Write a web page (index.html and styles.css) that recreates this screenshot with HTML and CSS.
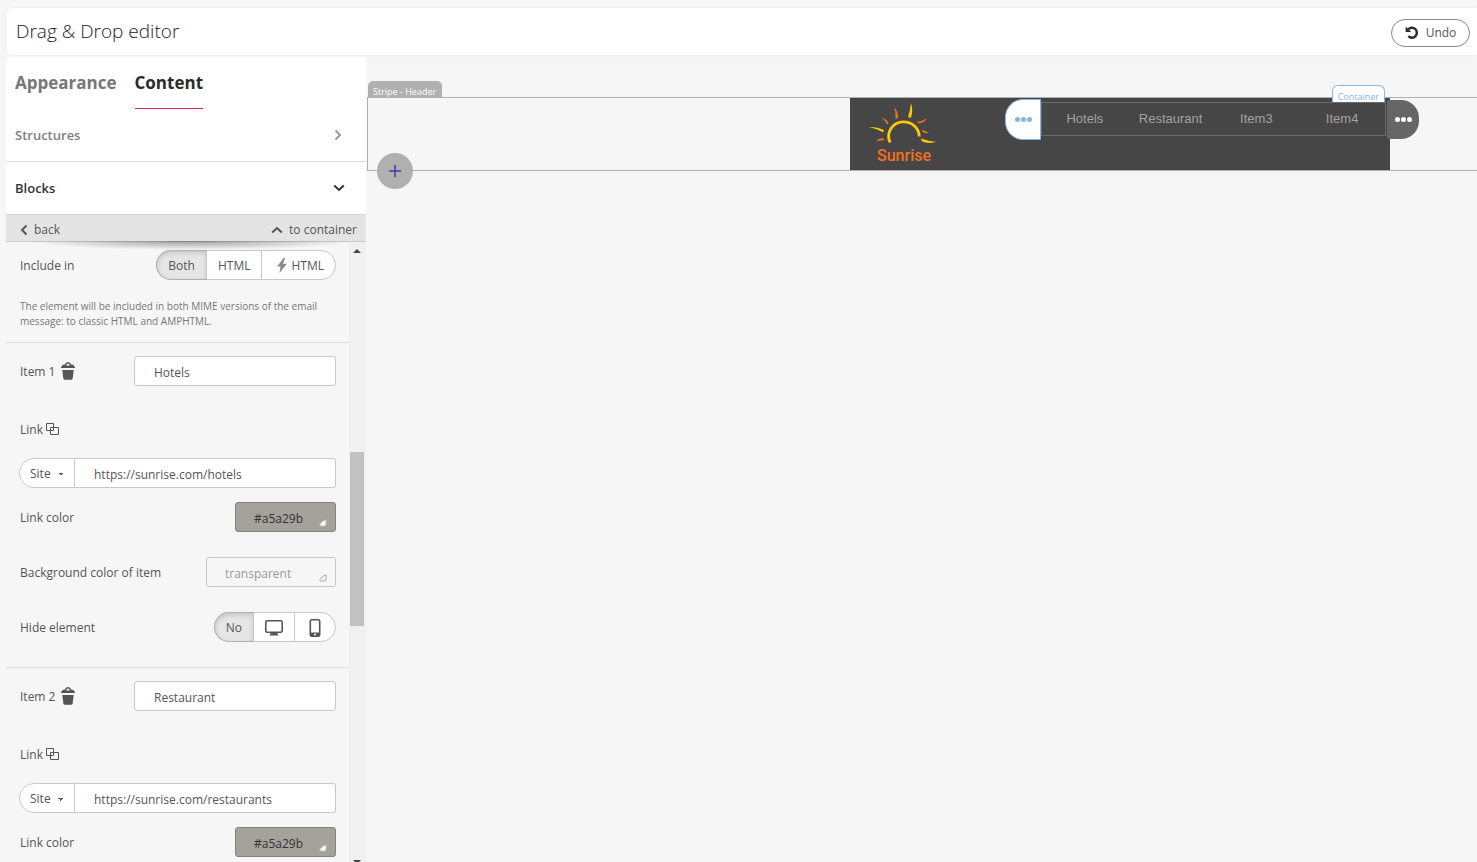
FILE: index.html
```html
<!DOCTYPE html>
<html lang="en">
<head>
<meta charset="utf-8">
<title>Drag &amp; Drop editor</title>
<link rel="stylesheet" href="styles.css">
</head>
<body>

<svg width="0" height="0" class="sprite">
  <symbol id="trash" viewBox="0 0 14 18">
    <path fill-rule="evenodd" d="M0 6Q.5 3 3.800 2.600 4.500 0 7 0t3.200 2.600Q13.500 3 14 6zM5.200 3.500h3.600Q8.600 1.600 7 1.600T5.200 3.500zM1.300 8h11.400l-1 8.200q-.2 1.600-1.700 1.600H4q-1.500 0-1.700-1.600z"/>
  </symbol>
  <symbol id="copy" viewBox="0 0 13 13">
    <path d="M.5.5h7v7h-7zM4.500 4.500h8v7h-8z" fill="none" stroke="currentColor"/>
  </symbol>
  <symbol id="corner" viewBox="0 0 8 8">
    <path d="M7 .8v4.200q0 2-2 2H2.200Q0 7 1 5.300 3 2 7 .8z"/>
  </symbol>
</svg>

<header class="topbar">
  <h1>Drag &amp; Drop editor</h1>
  <button class="undo" type="button">
    <svg width="14" height="14" viewBox="0 0 14 14"><path d="M3 3.500A5 5 0 1 1 3.300 10.200" fill="none" stroke="#2b2b33" stroke-width="2.400"/><path d="M.6 .4v5.600h5.600z" fill="#2b2b33"/></svg>
    Undo
  </button>
</header>

<div class="editor">
  <aside class="sidebar">
    <nav class="tabs">
      <a href="#appearance">Appearance</a>
      <a href="#content" class="active">Content</a>
    </nav>
    <button class="fold" type="button">Structures
      <svg width="8" height="12" viewBox="0 0 8 12"><path d="M1.500 1.500 6 6l-4.500 4.500" fill="none" stroke="#999" stroke-width="2"/></svg>
    </button>
    <button class="fold open" type="button">Blocks
      <svg width="12" height="8" viewBox="0 0 12 8"><path d="M1.200 1.500 6 6l4.800-4.500" fill="none" stroke="#333" stroke-width="2"/></svg>
    </button>
    <div class="crumbs">
      <a href="#back"><svg width="8" height="12" viewBox="0 0 8 12"><path d="M6.500 1.500 2 6l4.500 4.500" fill="none" stroke="#555" stroke-width="2"/></svg>back</a>
      <a href="#container"><svg width="12" height="8" viewBox="0 0 12 8"><path d="M1.200 6.500 6 2l4.800 4.500" fill="none" stroke="#555" stroke-width="2"/></svg>to container</a>
    </div>

    <div class="panel">
      <div class="settings">
        <section class="include">
          <div class="row">
            <span>Include in</span>
            <div class="group">
              <button class="on" type="button">Both</button>
              <button type="button">HTML</button>
              <button class="amp" type="button"><svg width="10" height="15" viewBox="0 0 10 15"><path d="M6.500 0 0 8.600h3.600L2.400 15 10 5.800H5.900L8.300 0z" fill="#8a8a8a"/></svg>HTML</button>
            </div>
          </div>
          <p class="hint">The element will be included in both MIME versions of the email message: to classic HTML and AMPHTML.</p>
        </section>

        <section class="item">
          <div class="row spaced">
            <label for="name1">Item 1</label>
            <button class="icon" type="button" aria-label="Delete item 1"><svg width="14" height="18"><use href="#trash"/></svg></button>
            <input class="name" id="name1" type="text" value="Hotels">
          </div>
          <div class="row tight">
            <label for="url1">Link</label>
            <button class="icon small" type="button" aria-label="Copy link 1"><svg width="13" height="13"><use href="#copy"/></svg></button>
          </div>
          <div class="row tight">
            <select class="kind" aria-label="Link type 1"><option>Site</option></select>
            <input class="url" id="url1" type="text" value="https://sunrise.com/hotels">
          </div>
          <div class="row">
            <label for="color1">Link color</label>
            <div class="swatch">
              <input id="color1" type="text" value="#a5a29b">
              <svg class="corner" width="8" height="8"><use href="#corner"/></svg>
            </div>
          </div>
          <div class="row">
            <label for="bg1">Background color of item</label>
            <div class="swatch empty">
              <input id="bg1" type="text" value="transparent">
              <svg class="corner" width="8" height="8"><use href="#corner"/></svg>
            </div>
          </div>
          <div class="row">
            <span>Hide element</span>
            <div class="group devices">
              <button class="on" type="button">No</button>
              <button type="button" aria-label="Desktop"><svg width="18" height="16" viewBox="0 0 18 16"><rect x=".8" y=".8" width="16.400" height="11.400" rx="1.500" fill="none" stroke="#555" stroke-width="1.600"/><path d="M6 12.500h6l1.500 3h-9z" fill="#555"/></svg></button>
              <button type="button" aria-label="Mobile"><svg width="12" height="18" viewBox="0 0 12 18"><rect x="1.300" y=".8" width="9.400" height="16.400" rx="1.500" fill="none" stroke="#555" stroke-width="1.600"/><path d="M1.500 13.500h9V17h-9z" fill="#555"/><circle cx="6" cy="15.500" r="1" fill="#fff"/></svg></button>
            </div>
          </div>
        </section>

        <section class="item">
          <div class="row spaced">
            <label for="name2">Item 2</label>
            <button class="icon" type="button" aria-label="Delete item 2"><svg width="14" height="18"><use href="#trash"/></svg></button>
            <input class="name" id="name2" type="text" value="Restaurant">
          </div>
          <div class="row tight">
            <label for="url2">Link</label>
            <button class="icon small" type="button" aria-label="Copy link 2"><svg width="13" height="13"><use href="#copy"/></svg></button>
          </div>
          <div class="row tight">
            <select class="kind" aria-label="Link type 2"><option>Site</option></select>
            <input class="url" id="url2" type="text" value="https://sunrise.com/restaurants">
          </div>
          <div class="row">
            <label for="color2">Link color</label>
            <div class="swatch">
              <input id="color2" type="text" value="#a5a29b">
              <svg class="corner" width="8" height="8"><use href="#corner"/></svg>
            </div>
          </div>
        </section>
      </div>
      <div class="scrollbar">
        <i class="up"></i>
        <i class="thumb"></i>
        <i class="down"></i>
      </div>
    </div>
  </aside>

  <main class="canvas">
    <div class="stripe">
      <span class="stripe-label">Stripe - Header</span>
      <button class="add" type="button" aria-label="Add stripe"><svg width="12" height="12" viewBox="0 0 12 12"><path d="M6 0v12M0 6h12" stroke="#4038a0" stroke-width="1.500"/></svg></button>
      <div class="mail">
        <svg class="logo" width="84" height="72" viewBox="0 0 84 72">
          <g fill="#ffc907">
            <path d="M51 5.300Q53.500 12 51 19.700L48 19.300Q50.300 12 51 5.300z"/>
            <path d="M9 29Q17 28.500 24 32L23.200 34.200Q16.500 30.600 9 29z"/>
            <path d="M61.300 40.500Q68 43.300 76 43.700Q68 46.500 61.600 43z"/>
          </g>
          <path d="M30 44.500C25.500 34 33 23.900 43.500 23.900 52 23.900 59 30 59.300 38.500" fill="none" stroke="#ffc907" stroke-width="2.800"/>
          <g fill="#f37021">
            <path d="M34.300 9.500Q38.600 14 38 20.300L35.500 20.800Q36 15 34.300 9.500z"/>
            <path d="M21.700 19.700Q26.500 20.500 28.600 25.300L26.800 26.300Q25 22 21.700 19.700z"/>
            <path d="M16 43.600Q19 39.500 23.800 40.500V42.600Q19 42 16 43.600z"/>
            <path d="M67 20.200Q64.500 25 58 25.300L57 23.700Q62 23.300 67 20.200z"/>
            <path d="M69 34.500Q66 36.500 62.300 33.700L62.600 31.700Q66 34 69 34.500z"/>
          </g>
          <text class="logo-text" x="44" y="63" text-anchor="middle">Sunrise</text>
        </svg>
        <nav class="menu">
          <a href="#hotels">Hotels</a>
          <a href="#restaurant">Restaurant</a>
          <a href="#item3">Item3</a>
          <a href="#item4">Item4</a>
          <span class="menu-label">Container</span>
          <button class="handle left" type="button" aria-label="Block menu"><i></i><i></i><i></i></button>
          <button class="handle right" type="button" aria-label="Structure menu"><i></i><i></i><i></i></button>
        </nav>
      </div>
    </div>
  </main>
</div>

</body>
</html>
```
FILE: styles.css
```css
* { box-sizing: border-box; }
body {
  margin: 0;
  padding: 8px 0 0 6px;
  height: 100vh;
  display: flex;
  flex-direction: column;
  overflow: hidden;
  background: #f6f6f6;
  color: #555;
  font: 12px/16px "Open Sans", sans-serif;
}
button, input, select { font: inherit; color: inherit; margin: 0; }
button { padding: 0; border: 0; background: none; cursor: pointer; }
a { color: inherit; text-decoration: none; }
svg { display: block; flex: none; }
.sprite { position: absolute; }

/* top bar */
.topbar {
  flex: none;
  display: flex;
  align-items: center;
  justify-content: space-between;
  height: 47px;
  margin-bottom: 2px;
  padding: 0 7px 0 10px;
  background: #fff;
  border-radius: 6px 0 0 6px;
  box-shadow: 0 0 3px rgba(0,0,0,.08);
}
.topbar h1 { margin: 0; padding-bottom: 2px; font-size: 19px; line-height: 24px; font-weight: 300; color: #222; }
.undo {
  display: flex;
  align-items: center;
  justify-content: center;
  gap: 7px;
  width: 79px;
  height: 28px;
  margin-top: 2px;
  border: 1px solid #888;
  border-radius: 14px;
}

/* sidebar */
.editor { flex: 1; display: flex; min-height: 0; }
.sidebar { flex: none; display: flex; flex-direction: column; width: 360px; background: #fff; border-radius: 6px 0 0 0; }
.tabs { display: flex; gap: 18px; height: 52px; padding-left: 9px; }
.tabs a { padding-top: 14px; font-size: 17px; line-height: 24px; font-weight: 700; color: #777; }
.tabs .active { color: #2b2b2b; border-bottom: 1px solid #e0137f; }
.fold {
  display: flex;
  align-items: center;
  justify-content: space-between;
  height: 53px;
  padding: 0 24px 0 9px;
  border-bottom: 1px solid #ddd;
  font-size: 13px;
  font-weight: 600;
  color: #808080;
}
.fold.open { padding-right: 21px; color: #333; border-bottom-color: #d5d5d5; }
.crumbs {
  position: relative;
  display: flex;
  justify-content: space-between;
  height: 27px;
  padding: 3px 9px 0 14px;
  background: #e4e4e4;
  border-bottom: 1px solid #ccc;
}
.crumbs a { display: flex; align-items: center; gap: 6px; }
.crumbs::after {
  content: "";
  position: absolute;
  left: 20px;
  right: 10px;
  top: 26px;
  height: 9px;
  background: radial-gradient(ellipse at 50% 0, rgba(0,0,0,.36), transparent 70%);
}

/* settings panel */
.panel { flex: 1; display: flex; min-height: 0; overflow: hidden; background: #f6f6f6; }
.settings { flex: 1; }
.include, .item { padding: 13px 13px 0; border-bottom: 1px solid #ddd; }
.include { padding-top: 8px; }
.item:last-child { border: 0; }
.row { display: flex; align-items: center; justify-content: space-between; height: 30px; margin-bottom: 25px; }
.row.tight { justify-content: flex-start; margin-bottom: 14px; }
.row.spaced { justify-content: flex-start; margin-bottom: 28px; }
.row label, .row > span { padding: 2px 0 0 1px; }
.include .row { margin-bottom: 19px; }
.hint { margin: 0; padding: 0 0 13px 1px; font-size: 10px; line-height: 15px; color: #777; }
.icon { margin-left: 6px; color: #555; fill: #555; }
.icon.small { margin-left: 3px; }

.row input {
  min-width: 0;
  height: 30px;
  padding: 2px 19px 0;
  border: 1px solid #c8c8c8;
  border-radius: 3px;
  background: #fff;
}
.row .name { width: 202px; margin-left: auto; }
.row .url { flex: 1; border-left: 0; border-radius: 0 3px 3px 0; }
.kind {
  appearance: none;
  width: 56px;
  height: 30px;
  padding: 1px 10px 0;
  border: 1px solid #c8c8c8;
  border-radius: 15px 0 0 15px;
  background: conic-gradient(from -45deg at 50% 100%, #555 90deg, transparent 0) 38px 14px / 6px 3px no-repeat, #fff;
  background: linear-gradient(to bottom left, #555 50%, transparent 50%) 38px 14px / 3px 3px no-repeat,
    linear-gradient(to bottom right, #555 50%, transparent 50%) 41px 14px / 3px 3px no-repeat, #fff;
}

.swatch { position: relative; width: 101px; }
.swatch input { width: 100%; padding: 2px 18px 0; background: #a5a29b; border-color: #85827b; color: #333; }
.swatch.empty { width: 130px; }
.swatch.empty input { background: none; border-color: #c8c8c8; color: #999; }
.corner { position: absolute; right: 9px; bottom: 5px; fill: #fff; stroke: #c4c2be; }
.empty .corner { fill: none; stroke: #aaa; }

.group { display: flex; height: 30px; border: 1px solid #c8c8c8; border-radius: 15px; background: #fff; }
.group button { display: flex; align-items: center; justify-content: center; gap: 4px; padding: 1px 11px 0; border-left: 1px solid #c8c8c8; }
.group button.amp { padding: 1px 11px 0 15px; }
.group.devices button + button { width: 41px; }
.group .on {
  border: 0;
  border-radius: 15px 0 0 15px;
  background: #e6e6e6;
  box-shadow: inset 0 2px 5px rgba(0,0,0,.15), 0 0 0 1px #b0b0b0;
}

.scrollbar { display: flex; flex-direction: column; align-items: center; width: 17px; padding: 7px 1px 0 0; background: #f0f0f0; }
.up { border: 4px solid transparent; border-top: 0; border-bottom-color: #444; }
.thumb { width: 14px; height: 174px; margin-top: 199px; background: #c1c1c1; }
.down { margin: auto 0 -2px; border: 4px solid transparent; border-bottom: 0; border-top-color: #444; }

/* canvas */
.canvas { flex: 1; min-width: 0; padding: 40px 0 0 1px; }
.stripe {
  position: relative;
  display: flex;
  justify-content: flex-end;
  padding-right: 87px;
  border: 1px solid #b0b0b0;
  border-right: 0;
}
.stripe-label {
  position: absolute;
  left: 0;
  top: -17px;
  height: 17px;
  padding: 3px 6px 0 5px;
  border-radius: 5px 5px 0 0;
  background: #b0b0b0;
  color: #fff;
  font-size: 9px;
  line-height: 15px;
}
.add {
  position: absolute;
  left: 9px;
  bottom: -19px;
  display: flex;
  align-items: center;
  justify-content: center;
  width: 36px;
  height: 36px;
  border-radius: 50%;
  background: #b0b0b0;
}
.mail { display: flex; justify-content: space-between; width: 540px; padding: 0 4px 0 10px; background: #464646; }
.logo-text { font: 500 16px Roboto, sans-serif; fill: #f37021; }
.menu {
  position: relative;
  display: grid;
  grid-template-columns: repeat(4, 1fr);
  width: 345px;
  height: 34px;
  margin-top: 4px;
  border: 1px solid #6a6a6a;
  font: 13px/31px "Liberation Sans", Arial, sans-serif;
  text-align: center;
  color: #a5a29b;
}
.menu-label {
  position: absolute;
  right: 0;
  top: -18px;
  height: 17px;
  padding: 3px 5px 0;
  border: 1px solid #85b5ee;
  border-bottom: 0;
  border-radius: 6px 6px 0 0;
  background: #fff;
  color: #85b5ee;
  font: 9px/15px "Open Sans", sans-serif;
}
.handle { position: absolute; display: flex; align-items: center; justify-content: center; gap: 1px; }
.handle i { width: 5px; height: 5px; border-radius: 50%; background: #fff; }
.handle.left { left: -37px; top: -4px; width: 36px; height: 41px; border: 1px solid #85b5ee; border-radius: 18px 0 0 18px; background: #fff; }
.handle.left i { background: #85b5ee; }
.handle.right { right: -34px; top: -3px; width: 32px; height: 39px; border-radius: 2px 18px 18px 2px; background: #666; }
```
